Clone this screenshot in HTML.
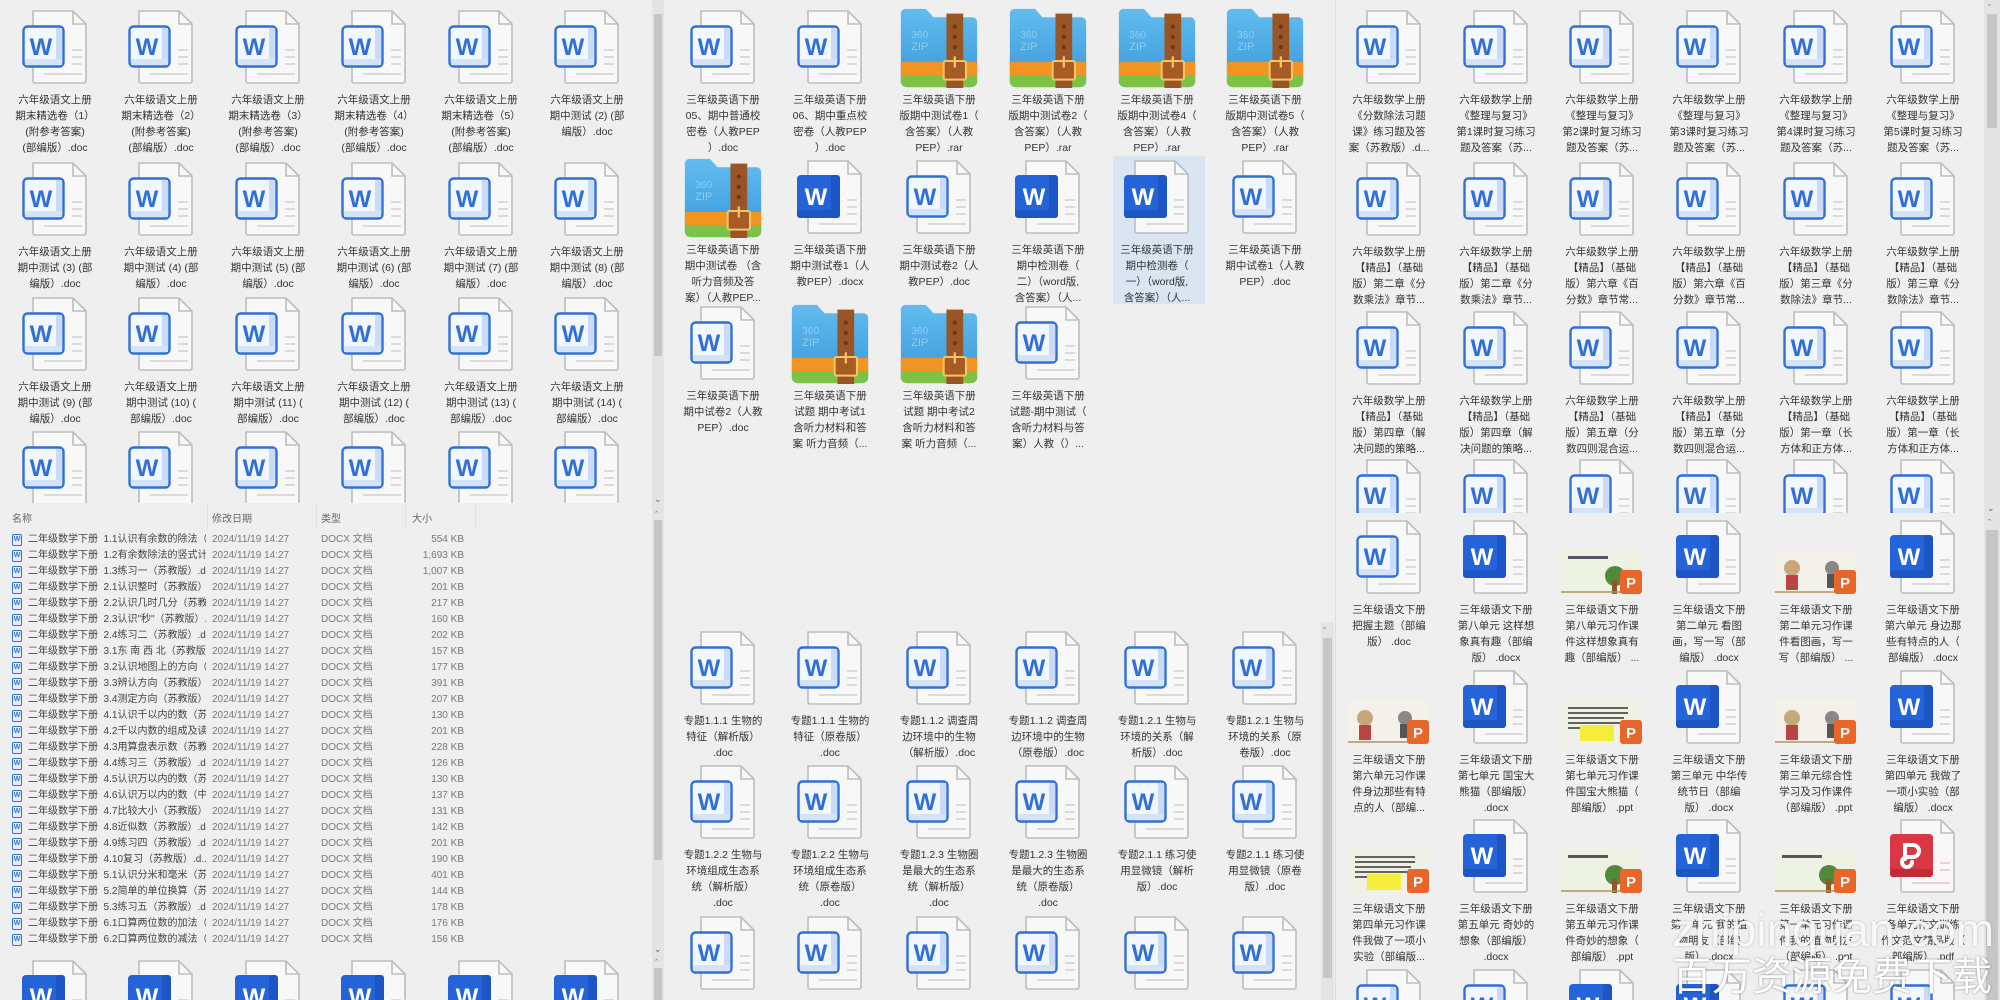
<!DOCTYPE html>
<html><head><meta charset="utf-8">
<style>
*{margin:0;padding:0;box-sizing:border-box}
body{width:2000px;height:1000px;background:#efefef;overflow:hidden;position:relative;font-family:"Liberation Sans","Noto Sans CJK SC",sans-serif;color:#333}
.p{position:absolute;overflow:hidden}
.i{position:absolute;width:110px;text-align:center;font-size:10.5px;line-height:16px;color:#333}
.i svg{display:block;margin:0 auto;width:66px;height:74px}
.i svg.z{width:80px;height:80px;margin-top:-2px;margin-bottom:-4px}
.i svg.pp{width:84px;height:74px}
.i .t{margin-top:8px;white-space:nowrap}
.r{position:absolute;left:0;width:650px;height:16px;font-size:10px;line-height:16px;color:#444}
.r b{position:absolute;left:12px;top:2px;width:10px;height:12px;border:1.5px solid #2f6fd6;border-radius:2px;background:#e8effb;font:bold 7px/9px "Liberation Sans",sans-serif;color:#2f6fd6;text-align:center}
.r .n{position:absolute;left:28px;width:178px;overflow:hidden;white-space:nowrap}
.r .d{position:absolute;left:212px;color:#777}
.r .y{position:absolute;left:321px;color:#777}
.r .s{position:absolute;left:400px;width:64px;text-align:right;color:#777}
.sb{position:absolute;background:#c6c6c6}
.tr{position:absolute;background:#e4e4e4}
.ar{position:absolute;font-size:9px;color:#666;line-height:10px}
</style></head><body>
<svg width="0" height="0" style="position:absolute">
<defs>
<symbol id="doc" viewBox="0 0 66 74">
<path d="M11 1h40l13 13v57a2 2 0 0 1-2 2H13a2 2 0 0 1-2-2z" fill="#f8f8f8" stroke="#bdbdbd" stroke-width="1.6"/>
<path d="M51 1v13h13" fill="none" stroke="#bdbdbd" stroke-width="1.6"/>
<path d="M50 40h10M50 47h10M50 54h10M22 64h38" stroke="#dadada" stroke-width="2"/>
<rect x="1.5" y="16.5" width="40" height="40" rx="4" fill="#f2f6fd" stroke="#2f6fd6" stroke-width="2.4"/>
<rect x="34" y="18" width="6" height="37" fill="#c9dbf6"/>
<rect x="3" y="49" width="37" height="6" fill="#d5e3f8"/>
<text x="19" y="45" font-family="Liberation Sans" font-weight="bold" font-size="24" fill="#2f6fd6" text-anchor="middle">W</text>
</symbol>
<symbol id="docx" viewBox="0 0 66 74">
<path d="M11 1h40l13 13v57a2 2 0 0 1-2 2H13a2 2 0 0 1-2-2z" fill="#f8f8f8" stroke="#bdbdbd" stroke-width="1.6"/>
<path d="M51 1v13h13" fill="none" stroke="#bdbdbd" stroke-width="1.6"/>
<path d="M50 40h10M50 47h10M50 54h10M22 64h38" stroke="#dadada" stroke-width="2"/>
<rect x="0" y="15" width="43" height="43" rx="4" fill="#2563d8"/>
<rect x="34" y="15" width="9" height="43" rx="3" fill="#1d55c4"/>
<rect x="0" y="50" width="43" height="8" rx="3" fill="#1d55c4"/>
<text x="19" y="45" font-family="Liberation Sans" font-weight="bold" font-size="24" fill="#fff" text-anchor="middle">W</text>
</symbol>
<symbol id="pdf" viewBox="0 0 66 74">
<path d="M11 1h40l13 13v57a2 2 0 0 1-2 2H13a2 2 0 0 1-2-2z" fill="#f8f8f8" stroke="#bdbdbd" stroke-width="1.6"/>
<path d="M51 1v13h13" fill="none" stroke="#bdbdbd" stroke-width="1.6"/>
<path d="M50 44h10M50 51h10M22 64h38" stroke="#eccfd2" stroke-width="2"/>
<rect x="0" y="15" width="43" height="43" rx="4" fill="#d93743"/>
<rect x="0" y="50" width="43" height="8" rx="3" fill="#c22a36"/>
<path d="M15 40V26h8a6 6 0 0 1 0 12h-6a5 5 0 1 0 5 5" fill="none" stroke="#fff" stroke-width="4" stroke-linecap="round"/>
</symbol>
<symbol id="zip" viewBox="0 0 84 86">
<defs><linearGradient id="zb" x1="0" y1="0" x2="0" y2="1"><stop offset="0" stop-color="#62bcef"/><stop offset="1" stop-color="#3a98da"/></linearGradient></defs>
<path d="M1 6a5 5 0 0 1 5-5h22l8 9h42a5 5 0 0 1 5 5v64a6 6 0 0 1-6 6H7a6 6 0 0 1-6-6z" fill="url(#zb)"/>
<path d="M1 58h82v14H1z" fill="#f29422"/>
<path d="M1 72h82v7a6 6 0 0 1-6 6H7a6 6 0 0 1-6-6z" fill="#7cc246"/>
<rect x="50" y="6" width="18" height="80" fill="#9a5526"/>
<circle cx="59" cy="20" r="2.2" fill="#6b3714"/><circle cx="59" cy="31" r="2.2" fill="#6b3714"/><circle cx="59" cy="42" r="2.2" fill="#6b3714"/>
<rect x="47" y="57" width="24" height="20" rx="2" fill="#a85c24" stroke="#f5c56c" stroke-width="2.2"/>
<path d="M59 52v12" stroke="#f5c56c" stroke-width="2.4"/>
<text x="12" y="32" font-family="Liberation Sans" font-size="11" fill="#8ccdf2">360</text>
<text x="12" y="45" font-family="Liberation Sans" font-size="12" fill="#8ccdf2">ZIP</text>
</symbol>
<symbol id="ppt" viewBox="0 0 84 74">
<rect x="1" y="30" width="80" height="44" fill="#eef2e2"/>
<rect x="8" y="36" width="40" height="3" fill="#556"/>
<circle cx="55" cy="56" r="10" fill="#4f8a3a"/><rect x="52" y="60" width="5" height="14" fill="#8a5a2c"/>
<path d="M1 72h80" stroke="#b09060" stroke-width="1.5"/>
<rect x="60" y="50" width="22" height="24" rx="3" fill="#e8662a"/>
<text x="71" y="68" font-family="Liberation Sans" font-weight="bold" font-size="15" fill="#fff" text-anchor="middle">P</text>
</symbol>
<symbol id="ppt2" viewBox="0 0 84 74">
<rect x="1" y="30" width="80" height="44" fill="#f3f1ea"/>
<circle cx="18" cy="48" r="8" fill="#c9a57a"/><rect x="12" y="55" width="12" height="15" fill="#b44"/>
<circle cx="58" cy="48" r="7" fill="#888"/><rect x="53" y="54" width="10" height="14" fill="#555"/>
<path d="M1 72h80" stroke="#b09060" stroke-width="1.5"/>
<rect x="60" y="50" width="22" height="24" rx="3" fill="#e8662a"/>
<text x="71" y="68" font-family="Liberation Sans" font-weight="bold" font-size="15" fill="#fff" text-anchor="middle">P</text>
</symbol>
<symbol id="ppt3" viewBox="0 0 84 74">
<rect x="1" y="30" width="80" height="44" fill="#eef1e4"/>
<path d="M8 38h60M8 43h60M8 48h56M8 53h60M8 58h40" stroke="#333" stroke-width="1.4"/>
<rect x="20" y="55" width="34" height="16" fill="#f4ee3a"/>
<rect x="60" y="50" width="22" height="24" rx="3" fill="#e8662a"/>
<text x="71" y="68" font-family="Liberation Sans" font-weight="bold" font-size="15" fill="#fff" text-anchor="middle">P</text>
</symbol>
</defs></svg>

<!-- LEFT UPPER -->
<div class="p" style="left:0;top:0;width:652px;height:503px">
<div class="i" style="left:0;top:10px"><svg><use href="#doc"/></svg><div class="t">六年级语文上册<br>期末精选卷（1）<br>(附参考答案)<br>(部编版）.doc</div></div>
<div class="i" style="left:106px;top:10px"><svg><use href="#doc"/></svg><div class="t">六年级语文上册<br>期末精选卷（2）<br>(附参考答案)<br>(部编版）.doc</div></div>
<div class="i" style="left:213px;top:10px"><svg><use href="#doc"/></svg><div class="t">六年级语文上册<br>期末精选卷（3）<br>(附参考答案)<br>(部编版）.doc</div></div>
<div class="i" style="left:319px;top:10px"><svg><use href="#doc"/></svg><div class="t">六年级语文上册<br>期末精选卷（4）<br>(附参考答案)<br>(部编版）.doc</div></div>
<div class="i" style="left:426px;top:10px"><svg><use href="#doc"/></svg><div class="t">六年级语文上册<br>期末精选卷（5）<br>(附参考答案)<br>(部编版）.doc</div></div>
<div class="i" style="left:532px;top:10px"><svg><use href="#doc"/></svg><div class="t">六年级语文上册<br>期中测试 (2) (部<br>编版）.doc</div></div>
<div class="i" style="left:0;top:162px"><svg><use href="#doc"/></svg><div class="t">六年级语文上册<br>期中测试 (3) (部<br>编版）.doc</div></div>
<div class="i" style="left:106px;top:162px"><svg><use href="#doc"/></svg><div class="t">六年级语文上册<br>期中测试 (4) (部<br>编版）.doc</div></div>
<div class="i" style="left:213px;top:162px"><svg><use href="#doc"/></svg><div class="t">六年级语文上册<br>期中测试 (5) (部<br>编版）.doc</div></div>
<div class="i" style="left:319px;top:162px"><svg><use href="#doc"/></svg><div class="t">六年级语文上册<br>期中测试 (6) (部<br>编版）.doc</div></div>
<div class="i" style="left:426px;top:162px"><svg><use href="#doc"/></svg><div class="t">六年级语文上册<br>期中测试 (7) (部<br>编版）.doc</div></div>
<div class="i" style="left:532px;top:162px"><svg><use href="#doc"/></svg><div class="t">六年级语文上册<br>期中测试 (8) (部<br>编版）.doc</div></div>
<div class="i" style="left:0;top:297px"><svg><use href="#doc"/></svg><div class="t">六年级语文上册<br>期中测试 (9) (部<br>编版）.doc</div></div>
<div class="i" style="left:106px;top:297px"><svg><use href="#doc"/></svg><div class="t">六年级语文上册<br>期中测试 (10) (<br>部编版）.doc</div></div>
<div class="i" style="left:213px;top:297px"><svg><use href="#doc"/></svg><div class="t">六年级语文上册<br>期中测试 (11) (<br>部编版）.doc</div></div>
<div class="i" style="left:319px;top:297px"><svg><use href="#doc"/></svg><div class="t">六年级语文上册<br>期中测试 (12) (<br>部编版）.doc</div></div>
<div class="i" style="left:426px;top:297px"><svg><use href="#doc"/></svg><div class="t">六年级语文上册<br>期中测试 (13) (<br>部编版）.doc</div></div>
<div class="i" style="left:532px;top:297px"><svg><use href="#doc"/></svg><div class="t">六年级语文上册<br>期中测试 (14) (<br>部编版）.doc</div></div>
<div class="i" style="left:0;top:431px"><svg><use href="#doc"/></svg></div>
<div class="i" style="left:106px;top:431px"><svg><use href="#doc"/></svg></div>
<div class="i" style="left:213px;top:431px"><svg><use href="#doc"/></svg></div>
<div class="i" style="left:319px;top:431px"><svg><use href="#doc"/></svg></div>
<div class="i" style="left:426px;top:431px"><svg><use href="#doc"/></svg></div>
<div class="i" style="left:532px;top:431px"><svg><use href="#doc"/></svg></div>
</div>
<div class="tr" style="left:652px;top:0;width:12px;height:1000px"></div>
<div class="sb" style="left:654px;top:14px;width:8px;height:342px"></div>
<div class="ar" style="left:654px;top:494px">&#8964;</div>
<div class="ar" style="left:655px;top:510px">&#710;</div>
<div class="sb" style="left:654px;top:520px;width:8px;height:340px"></div>
<div class="ar" style="left:654px;top:944px">&#8964;</div>
<div class="ar" style="left:655px;top:958px">&#710;</div>
<div class="sb" style="left:654px;top:968px;width:8px;height:32px"></div>

<!-- LIST -->
<div class="p" style="left:0;top:503px;width:652px;height:447px">
<div style="position:absolute;left:0;top:0;width:652px;height:28px;font-size:10px;color:#666">
<span style="position:absolute;left:12px;top:7px">名称</span>
<span style="position:absolute;left:105px;top:-2px;font-size:10px;color:#999">&#710;</span>
<span style="position:absolute;left:212px;top:7px">修改日期</span>
<span style="position:absolute;left:321px;top:7px">类型</span>
<span style="position:absolute;left:412px;top:7px">大小</span>
<i style="position:absolute;left:207px;top:2px;width:1px;height:24px;background:#e0e0e0"></i>
<i style="position:absolute;left:316px;top:2px;width:1px;height:24px;background:#e0e0e0"></i>
<i style="position:absolute;left:405px;top:2px;width:1px;height:24px;background:#e0e0e0"></i>
<i style="position:absolute;left:475px;top:2px;width:1px;height:24px;background:#e0e0e0"></i>
</div>
</div>
<div class="r" style="top:532px"><b>W</b><span class="n">二年级数学下册&nbsp; 1.1认识有余数的除法（...</span><span class="d">2024/11/19 14:27</span><span class="y">DOCX 文档</span><span class="s">554 KB</span></div>
<div class="r" style="top:548px"><b>W</b><span class="n">二年级数学下册&nbsp; 1.2有余数除法的竖式计...</span><span class="d">2024/11/19 14:27</span><span class="y">DOCX 文档</span><span class="s">1,693 KB</span></div>
<div class="r" style="top:564px"><b>W</b><span class="n">二年级数学下册&nbsp; 1.3练习一（苏教版）.d...</span><span class="d">2024/11/19 14:27</span><span class="y">DOCX 文档</span><span class="s">1,007 KB</span></div>
<div class="r" style="top:580px"><b>W</b><span class="n">二年级数学下册&nbsp; 2.1认识整时（苏教版）...</span><span class="d">2024/11/19 14:27</span><span class="y">DOCX 文档</span><span class="s">201 KB</span></div>
<div class="r" style="top:596px"><b>W</b><span class="n">二年级数学下册&nbsp; 2.2认识几时几分（苏教...</span><span class="d">2024/11/19 14:27</span><span class="y">DOCX 文档</span><span class="s">217 KB</span></div>
<div class="r" style="top:612px"><b>W</b><span class="n">二年级数学下册&nbsp; 2.3认识"秒"（苏教版）...</span><span class="d">2024/11/19 14:27</span><span class="y">DOCX 文档</span><span class="s">160 KB</span></div>
<div class="r" style="top:628px"><b>W</b><span class="n">二年级数学下册&nbsp; 2.4练习二（苏教版）.d...</span><span class="d">2024/11/19 14:27</span><span class="y">DOCX 文档</span><span class="s">202 KB</span></div>
<div class="r" style="top:644px"><b>W</b><span class="n">二年级数学下册&nbsp; 3.1东 南 西 北（苏教版...</span><span class="d">2024/11/19 14:27</span><span class="y">DOCX 文档</span><span class="s">157 KB</span></div>
<div class="r" style="top:660px"><b>W</b><span class="n">二年级数学下册&nbsp; 3.2认识地图上的方向（...</span><span class="d">2024/11/19 14:27</span><span class="y">DOCX 文档</span><span class="s">177 KB</span></div>
<div class="r" style="top:676px"><b>W</b><span class="n">二年级数学下册&nbsp; 3.3辨认方向（苏教版）...</span><span class="d">2024/11/19 14:27</span><span class="y">DOCX 文档</span><span class="s">391 KB</span></div>
<div class="r" style="top:692px"><b>W</b><span class="n">二年级数学下册&nbsp; 3.4测定方向（苏教版）...</span><span class="d">2024/11/19 14:27</span><span class="y">DOCX 文档</span><span class="s">207 KB</span></div>
<div class="r" style="top:708px"><b>W</b><span class="n">二年级数学下册&nbsp; 4.1认识千以内的数（苏...</span><span class="d">2024/11/19 14:27</span><span class="y">DOCX 文档</span><span class="s">130 KB</span></div>
<div class="r" style="top:724px"><b>W</b><span class="n">二年级数学下册&nbsp; 4.2千以内数的组成及读...</span><span class="d">2024/11/19 14:27</span><span class="y">DOCX 文档</span><span class="s">201 KB</span></div>
<div class="r" style="top:740px"><b>W</b><span class="n">二年级数学下册&nbsp; 4.3用算盘表示数（苏教...</span><span class="d">2024/11/19 14:27</span><span class="y">DOCX 文档</span><span class="s">228 KB</span></div>
<div class="r" style="top:756px"><b>W</b><span class="n">二年级数学下册&nbsp; 4.4练习三（苏教版）.d...</span><span class="d">2024/11/19 14:27</span><span class="y">DOCX 文档</span><span class="s">126 KB</span></div>
<div class="r" style="top:772px"><b>W</b><span class="n">二年级数学下册&nbsp; 4.5认识万以内的数（苏...</span><span class="d">2024/11/19 14:27</span><span class="y">DOCX 文档</span><span class="s">130 KB</span></div>
<div class="r" style="top:788px"><b>W</b><span class="n">二年级数学下册&nbsp; 4.6认识万以内的数（中...</span><span class="d">2024/11/19 14:27</span><span class="y">DOCX 文档</span><span class="s">137 KB</span></div>
<div class="r" style="top:804px"><b>W</b><span class="n">二年级数学下册&nbsp; 4.7比较大小（苏教版）...</span><span class="d">2024/11/19 14:27</span><span class="y">DOCX 文档</span><span class="s">131 KB</span></div>
<div class="r" style="top:820px"><b>W</b><span class="n">二年级数学下册&nbsp; 4.8近似数（苏教版）.d...</span><span class="d">2024/11/19 14:27</span><span class="y">DOCX 文档</span><span class="s">142 KB</span></div>
<div class="r" style="top:836px"><b>W</b><span class="n">二年级数学下册&nbsp; 4.9练习四（苏教版）.d...</span><span class="d">2024/11/19 14:27</span><span class="y">DOCX 文档</span><span class="s">201 KB</span></div>
<div class="r" style="top:852px"><b>W</b><span class="n">二年级数学下册&nbsp; 4.10复习（苏教版）.d...</span><span class="d">2024/11/19 14:27</span><span class="y">DOCX 文档</span><span class="s">190 KB</span></div>
<div class="r" style="top:868px"><b>W</b><span class="n">二年级数学下册&nbsp; 5.1认识分米和毫米（苏...</span><span class="d">2024/11/19 14:27</span><span class="y">DOCX 文档</span><span class="s">401 KB</span></div>
<div class="r" style="top:884px"><b>W</b><span class="n">二年级数学下册&nbsp; 5.2简单的单位换算（苏...</span><span class="d">2024/11/19 14:27</span><span class="y">DOCX 文档</span><span class="s">144 KB</span></div>
<div class="r" style="top:900px"><b>W</b><span class="n">二年级数学下册&nbsp; 5.3练习五（苏教版）.d...</span><span class="d">2024/11/19 14:27</span><span class="y">DOCX 文档</span><span class="s">178 KB</span></div>
<div class="r" style="top:916px"><b>W</b><span class="n">二年级数学下册&nbsp; 6.1口算两位数的加法（...</span><span class="d">2024/11/19 14:27</span><span class="y">DOCX 文档</span><span class="s">176 KB</span></div>
<div class="r" style="top:932px"><b>W</b><span class="n">二年级数学下册&nbsp; 6.2口算两位数的减法（...</span><span class="d">2024/11/19 14:27</span><span class="y">DOCX 文档</span><span class="s">156 KB</span></div>

<!-- LEFT BOTTOM -->
<div class="p" style="left:0;top:950px;width:652px;height:50px">
<div class="i" style="left:0;top:10px"><svg><use href="#docx"/></svg></div>
<div class="i" style="left:106px;top:10px"><svg><use href="#docx"/></svg></div>
<div class="i" style="left:213px;top:10px"><svg><use href="#docx"/></svg></div>
<div class="i" style="left:319px;top:10px"><svg><use href="#docx"/></svg></div>
<div class="i" style="left:426px;top:10px"><svg><use href="#docx"/></svg></div>
<div class="i" style="left:532px;top:10px"><svg><use href="#docx"/></svg></div>
</div>

<!-- MIDDLE UPPER -->
<div class="p" style="left:665px;top:0;width:670px;height:622px">
<div style="position:absolute;left:448px;top:156px;width:92px;height:148px;background:#d9e5f1"></div>
<div class="i" style="left:3px;top:10px"><svg><use href="#doc"/></svg><div class="t">三年级英语下册<br>05、期中普通校<br>密卷（人教PEP<br>）.doc</div></div>
<div class="i" style="left:110px;top:10px"><svg><use href="#doc"/></svg><div class="t">三年级英语下册<br>06、期中重点校<br>密卷（人教PEP<br>）.doc</div></div>
<div class="i" style="left:219px;top:10px"><svg class="z"><use href="#zip"/></svg><div class="t">三年级英语下册<br>版期中测试卷1（<br>含答案）（人教<br>PEP）.rar</div></div>
<div class="i" style="left:328px;top:10px"><svg class="z"><use href="#zip"/></svg><div class="t">三年级英语下册<br>版期中测试卷2（<br>含答案）（人教<br>PEP）.rar</div></div>
<div class="i" style="left:437px;top:10px"><svg class="z"><use href="#zip"/></svg><div class="t">三年级英语下册<br>版期中测试卷4（<br>含答案）（人教<br>PEP）.rar</div></div>
<div class="i" style="left:545px;top:10px"><svg class="z"><use href="#zip"/></svg><div class="t">三年级英语下册<br>版期中测试卷5（<br>含答案）（人教<br>PEP）.rar</div></div>
<div class="i" style="left:3px;top:160px"><svg class="z"><use href="#zip"/></svg><div class="t">三年级英语下册<br>期中测试卷 （含<br>听力音频及答<br>案）（人教PEP...</div></div>
<div class="i" style="left:110px;top:160px"><svg><use href="#docx"/></svg><div class="t">三年级英语下册<br>期中测试卷1（人<br>教PEP）.docx</div></div>
<div class="i" style="left:219px;top:160px"><svg><use href="#doc"/></svg><div class="t">三年级英语下册<br>期中测试卷2（人<br>教PEP）.doc</div></div>
<div class="i" style="left:328px;top:160px"><svg><use href="#docx"/></svg><div class="t">三年级英语下册<br>期中检测卷（<br>二）（word版,<br>含答案）（人...</div></div>
<div class="i" style="left:437px;top:160px"><svg><use href="#docx"/></svg><div class="t">三年级英语下册<br>期中检测卷（<br>一）（word版,<br>含答案）（人...</div></div>
<div class="i" style="left:545px;top:160px"><svg><use href="#doc"/></svg><div class="t">三年级英语下册<br>期中试卷1（人教<br>PEP）.doc</div></div>
<div class="i" style="left:3px;top:306px"><svg><use href="#doc"/></svg><div class="t">三年级英语下册<br>期中试卷2（人教<br>PEP）.doc</div></div>
<div class="i" style="left:110px;top:306px"><svg class="z"><use href="#zip"/></svg><div class="t">三年级英语下册<br>试题 期中考试1<br>含听力材料和答<br>案 听力音频（...</div></div>
<div class="i" style="left:219px;top:306px"><svg class="z"><use href="#zip"/></svg><div class="t">三年级英语下册<br>试题 期中考试2<br>含听力材料和答<br>案 听力音频（...</div></div>
<div class="i" style="left:328px;top:306px"><svg><use href="#doc"/></svg><div class="t">三年级英语下册<br>试题-期中测试（<br>含听力材料与答<br>案）人教（）...</div></div>
</div>

<!-- MIDDLE LOWER -->
<div class="p" style="left:665px;top:622px;width:655px;height:378px">
<div class="i" style="left:3px;top:9px"><svg><use href="#doc"/></svg><div class="t">专题1.1.1 生物的<br>特征（解析版）<br>.doc</div></div>
<div class="i" style="left:110px;top:9px"><svg><use href="#doc"/></svg><div class="t">专题1.1.1 生物的<br>特征（原卷版）<br>.doc</div></div>
<div class="i" style="left:219px;top:9px"><svg><use href="#doc"/></svg><div class="t">专题1.1.2 调查周<br>边环境中的生物<br>（解析版）.doc</div></div>
<div class="i" style="left:328px;top:9px"><svg><use href="#doc"/></svg><div class="t">专题1.1.2 调查周<br>边环境中的生物<br>（原卷版）.doc</div></div>
<div class="i" style="left:437px;top:9px"><svg><use href="#doc"/></svg><div class="t">专题1.2.1 生物与<br>环境的关系（解<br>析版）.doc</div></div>
<div class="i" style="left:545px;top:9px"><svg><use href="#doc"/></svg><div class="t">专题1.2.1 生物与<br>环境的关系（原<br>卷版）.doc</div></div>
<div class="i" style="left:3px;top:143px"><svg><use href="#doc"/></svg><div class="t">专题1.2.2 生物与<br>环境组成生态系<br>统（解析版）<br>.doc</div></div>
<div class="i" style="left:110px;top:143px"><svg><use href="#doc"/></svg><div class="t">专题1.2.2 生物与<br>环境组成生态系<br>统（原卷版）<br>.doc</div></div>
<div class="i" style="left:219px;top:143px"><svg><use href="#doc"/></svg><div class="t">专题1.2.3 生物圈<br>是最大的生态系<br>统（解析版）<br>.doc</div></div>
<div class="i" style="left:328px;top:143px"><svg><use href="#doc"/></svg><div class="t">专题1.2.3 生物圈<br>是最大的生态系<br>统（原卷版）<br>.doc</div></div>
<div class="i" style="left:437px;top:143px"><svg><use href="#doc"/></svg><div class="t">专题2.1.1 练习使<br>用显微镜（解析<br>版）.doc</div></div>
<div class="i" style="left:545px;top:143px"><svg><use href="#doc"/></svg><div class="t">专题2.1.1 练习使<br>用显微镜（原卷<br>版）.doc</div></div>
<div class="i" style="left:3px;top:294px"><svg><use href="#doc"/></svg><div class="t">专题2.1.2 植物细</div></div>
<div class="i" style="left:110px;top:294px"><svg><use href="#doc"/></svg><div class="t">专题2.1.2 植物细</div></div>
<div class="i" style="left:219px;top:294px"><svg><use href="#doc"/></svg><div class="t">专题2.1.3 动物细</div></div>
<div class="i" style="left:328px;top:294px"><svg><use href="#doc"/></svg><div class="t">专题2.1.3 动物细</div></div>
<div class="i" style="left:437px;top:294px"><svg><use href="#doc"/></svg><div class="t">专题2.1.4 细胞的</div></div>
<div class="i" style="left:545px;top:294px"><svg><use href="#doc"/></svg><div class="t">专题2.1.4 细胞的</div></div>
</div>
<div class="tr" style="left:1321px;top:622px;width:13px;height:378px"></div>
<div class="ar" style="left:1323px;top:626px">&#710;</div>
<div class="sb" style="left:1323px;top:638px;width:9px;height:340px"></div>
<div style="position:absolute;left:1335px;top:0;width:1px;height:1000px;background:#dcdcdc"></div>

<!-- RIGHT UPPER -->
<div class="p" style="left:1336px;top:0;width:648px;height:513px">
<div class="i" style="left:-2px;top:10px"><svg><use href="#doc"/></svg><div class="t">六年级数学上册<br>《分数除法习题<br>课》练习题及答<br>案（苏教版）.d...</div></div>
<div class="i" style="left:105px;top:10px"><svg><use href="#doc"/></svg><div class="t">六年级数学上册<br>《整理与复习》<br>第1课时复习练习<br>题及答案（苏...</div></div>
<div class="i" style="left:211px;top:10px"><svg><use href="#doc"/></svg><div class="t">六年级数学上册<br>《整理与复习》<br>第2课时复习练习<br>题及答案（苏...</div></div>
<div class="i" style="left:318px;top:10px"><svg><use href="#doc"/></svg><div class="t">六年级数学上册<br>《整理与复习》<br>第3课时复习练习<br>题及答案（苏...</div></div>
<div class="i" style="left:425px;top:10px"><svg><use href="#doc"/></svg><div class="t">六年级数学上册<br>《整理与复习》<br>第4课时复习练习<br>题及答案（苏...</div></div>
<div class="i" style="left:532px;top:10px"><svg><use href="#doc"/></svg><div class="t">六年级数学上册<br>《整理与复习》<br>第5课时复习练习<br>题及答案（苏...</div></div>
<div class="i" style="left:-2px;top:162px"><svg><use href="#doc"/></svg><div class="t">六年级数学上册<br>【精品】（基础<br>版）第二章《分<br>数乘法》章节...</div></div>
<div class="i" style="left:105px;top:162px"><svg><use href="#doc"/></svg><div class="t">六年级数学上册<br>【精品】（基础<br>版）第二章《分<br>数乘法》章节...</div></div>
<div class="i" style="left:211px;top:162px"><svg><use href="#doc"/></svg><div class="t">六年级数学上册<br>【精品】（基础<br>版）第六章《百<br>分数》章节常...</div></div>
<div class="i" style="left:318px;top:162px"><svg><use href="#doc"/></svg><div class="t">六年级数学上册<br>【精品】（基础<br>版）第六章《百<br>分数》章节常...</div></div>
<div class="i" style="left:425px;top:162px"><svg><use href="#doc"/></svg><div class="t">六年级数学上册<br>【精品】（基础<br>版）第三章《分<br>数除法》章节...</div></div>
<div class="i" style="left:532px;top:162px"><svg><use href="#doc"/></svg><div class="t">六年级数学上册<br>【精品】（基础<br>版）第三章《分<br>数除法》章节...</div></div>
<div class="i" style="left:-2px;top:311px"><svg><use href="#doc"/></svg><div class="t">六年级数学上册<br>【精品】（基础<br>版）第四章（解<br>决问题的策略...</div></div>
<div class="i" style="left:105px;top:311px"><svg><use href="#doc"/></svg><div class="t">六年级数学上册<br>【精品】（基础<br>版）第四章（解<br>决问题的策略...</div></div>
<div class="i" style="left:211px;top:311px"><svg><use href="#doc"/></svg><div class="t">六年级数学上册<br>【精品】（基础<br>版）第五章（分<br>数四则混合运...</div></div>
<div class="i" style="left:318px;top:311px"><svg><use href="#doc"/></svg><div class="t">六年级数学上册<br>【精品】（基础<br>版）第五章（分<br>数四则混合运...</div></div>
<div class="i" style="left:425px;top:311px"><svg><use href="#doc"/></svg><div class="t">六年级数学上册<br>【精品】（基础<br>版）第一章（长<br>方体和正方体...</div></div>
<div class="i" style="left:532px;top:311px"><svg><use href="#doc"/></svg><div class="t">六年级数学上册<br>【精品】（基础<br>版）第一章（长<br>方体和正方体...</div></div>
<div class="i" style="left:-2px;top:459px"><svg><use href="#doc"/></svg></div>
<div class="i" style="left:105px;top:459px"><svg><use href="#doc"/></svg></div>
<div class="i" style="left:211px;top:459px"><svg><use href="#doc"/></svg></div>
<div class="i" style="left:318px;top:459px"><svg><use href="#doc"/></svg></div>
<div class="i" style="left:425px;top:459px"><svg><use href="#doc"/></svg></div>
<div class="i" style="left:532px;top:459px"><svg><use href="#doc"/></svg></div>
</div>

<!-- RIGHT LOWER -->
<div class="p" style="left:1336px;top:513px;width:648px;height:487px">
<div class="i" style="left:-2px;top:7px"><svg><use href="#doc"/></svg><div class="t">三年级语文下册<br>把握主题（部编<br>版） .doc</div></div>
<div class="i" style="left:105px;top:7px"><svg><use href="#docx"/></svg><div class="t">三年级语文下册<br>第八单元 这样想<br>象真有趣（部编<br>版） .docx</div></div>
<div class="i" style="left:211px;top:7px"><svg class="pp"><use href="#ppt"/></svg><div class="t">三年级语文下册<br>第八单元习作课<br>件这样想象真有<br>趣（部编版） ...</div></div>
<div class="i" style="left:318px;top:7px"><svg><use href="#docx"/></svg><div class="t">三年级语文下册<br>第二单元 看图<br>画，写一写（部<br>编版） .docx</div></div>
<div class="i" style="left:425px;top:7px"><svg class="pp"><use href="#ppt2"/></svg><div class="t">三年级语文下册<br>第二单元习作课<br>件看图画，写一<br>写（部编版） ...</div></div>
<div class="i" style="left:532px;top:7px"><svg><use href="#docx"/></svg><div class="t">三年级语文下册<br>第六单元 身边那<br>些有特点的人（<br>部编版） .docx</div></div>
<div class="i" style="left:-2px;top:157px"><svg class="pp"><use href="#ppt2"/></svg><div class="t">三年级语文下册<br>第六单元习作课<br>件身边那些有特<br>点的人（部编...</div></div>
<div class="i" style="left:105px;top:157px"><svg><use href="#docx"/></svg><div class="t">三年级语文下册<br>第七单元 国宝大<br>熊猫（部编版）<br>.docx</div></div>
<div class="i" style="left:211px;top:157px"><svg class="pp"><use href="#ppt3"/></svg><div class="t">三年级语文下册<br>第七单元习作课<br>件国宝大熊猫（<br>部编版） .ppt</div></div>
<div class="i" style="left:318px;top:157px"><svg><use href="#docx"/></svg><div class="t">三年级语文下册<br>第三单元 中华传<br>统节日（部编<br>版） .docx</div></div>
<div class="i" style="left:425px;top:157px"><svg class="pp"><use href="#ppt2"/></svg><div class="t">三年级语文下册<br>第三单元综合性<br>学习及习作课件<br>（部编版） .ppt</div></div>
<div class="i" style="left:532px;top:157px"><svg><use href="#docx"/></svg><div class="t">三年级语文下册<br>第四单元 我做了<br>一项小实验（部<br>编版） .docx</div></div>
<div class="i" style="left:-2px;top:306px"><svg class="pp"><use href="#ppt3"/></svg><div class="t">三年级语文下册<br>第四单元习作课<br>件我做了一项小<br>实验（部编版...</div></div>
<div class="i" style="left:105px;top:306px"><svg><use href="#docx"/></svg><div class="t">三年级语文下册<br>第五单元 奇妙的<br>想象（部编版）<br>.docx</div></div>
<div class="i" style="left:211px;top:306px"><svg class="pp"><use href="#ppt"/></svg><div class="t">三年级语文下册<br>第五单元习作课<br>件奇妙的想象（<br>部编版） .ppt</div></div>
<div class="i" style="left:318px;top:306px"><svg><use href="#docx"/></svg><div class="t">三年级语文下册<br>第一单元 我的植<br>物朋友（部编<br>版） .docx</div></div>
<div class="i" style="left:425px;top:306px"><svg class="pp"><use href="#ppt"/></svg><div class="t">三年级语文下册<br>第一单元习作课<br>件我的植物朋友<br>（部编版） .ppt</div></div>
<div class="i" style="left:532px;top:306px"><svg><use href="#pdf"/></svg><div class="t">三年级语文下册<br>各单元作文训练<br>作文范文精品版（<br>部编版） .pdf</div></div>
<div class="i" style="left:-2px;top:456px"><svg><use href="#doc"/></svg></div>
<div class="i" style="left:105px;top:456px"><svg><use href="#doc"/></svg></div>
<div class="i" style="left:211px;top:456px"><svg><use href="#docx"/></svg></div>
<div class="i" style="left:318px;top:456px"><svg><use href="#docx"/></svg></div>
<div class="i" style="left:425px;top:456px"><svg><use href="#doc"/></svg></div>
<div class="i" style="left:532px;top:456px"><svg><use href="#doc"/></svg></div>
</div>
<div class="tr" style="left:1984px;top:0;width:16px;height:1000px"></div>
<div class="ar" style="left:1988px;top:3px">&#710;</div>
<div class="sb" style="left:1987px;top:14px;width:10px;height:114px"></div>
<div class="ar" style="left:1987px;top:503px">&#8964;</div>
<div class="ar" style="left:1988px;top:518px">&#710;</div>
<div class="sb" style="left:1986px;top:530px;width:12px;height:470px"></div>

<!-- WATERMARK -->
<div style="position:absolute;left:1672px;top:905px;font-size:46px;line-height:50px;color:rgba(255,255,255,0.9);text-shadow:0 0 2px rgba(0,0,0,0.25);white-space:nowrap">zhipinquan.com</div>
<div style="position:absolute;left:1672px;top:955px;font-size:40px;line-height:44px;color:#fff;text-shadow:0 0 2px rgba(0,0,0,0.45);white-space:nowrap;font-family:'Liberation Sans','Noto Sans CJK SC',sans-serif">百万资源免费下载</div>
</body></html>
